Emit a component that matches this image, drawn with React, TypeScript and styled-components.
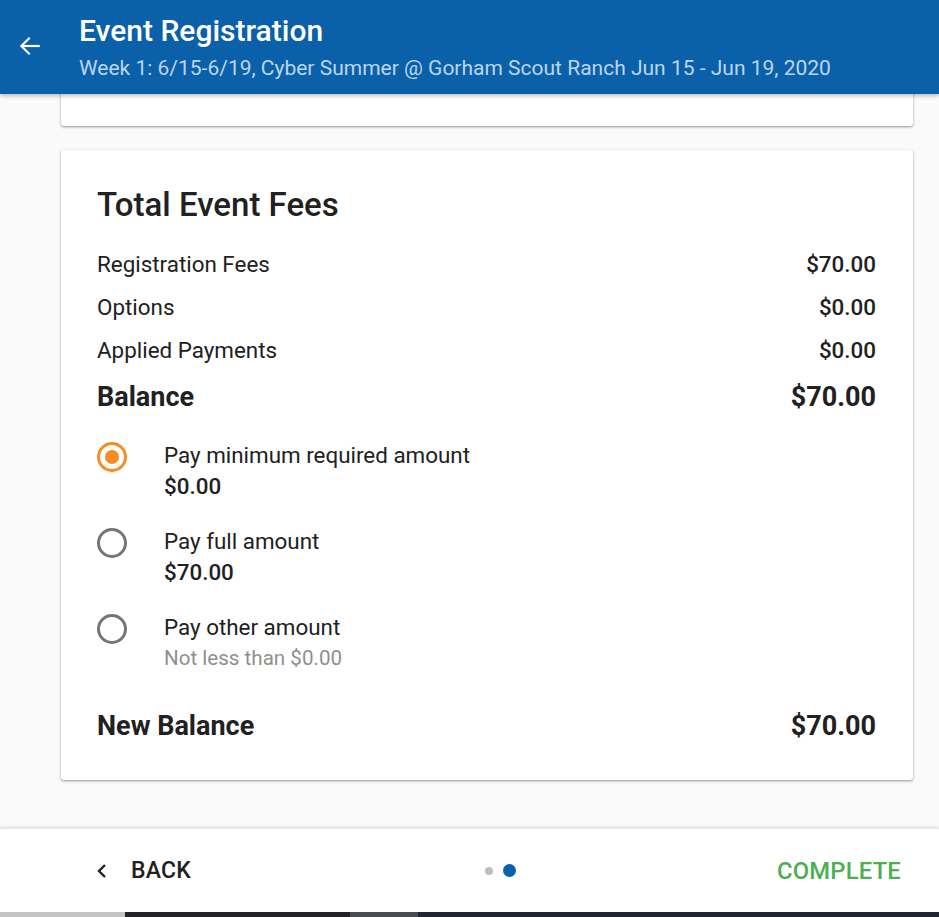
import React, { useState } from "react";
import styled, { createGlobalStyle } from "styled-components";

const Global = createGlobalStyle`
  html, body { margin: 0; padding: 0; background: #fafafa; }
  body { font-family: Roboto, "Noto Sans", Arial, sans-serif; color: #212121; }
  * { box-sizing: border-box; }
`;

const Page = styled.div`
  width: 939px;
  height: 917px;
  display: flex;
  flex-direction: column;
  overflow: hidden;
  background: #fafafa;
`;

const Header = styled.header`
  height: 94px;
  flex: none;
  background: #0a60a9;
  display: flex;
  align-items: flex-start;
  padding: 0 0 0 16px;
  position: relative;
  z-index: 2;
  box-shadow: 0 2px 4px rgba(0, 0, 0, 0.25);
`;

const BackIcon = styled.button`
  border: 0;
  background: none;
  padding: 0;
  margin-top: 32px;
  width: 28px;
  height: 28px;
  display: flex;
  align-items: center;
  justify-content: center;
  color: #fff;
  cursor: pointer;
`;

const HeaderText = styled.div`
  margin-left: 35px;
  display: flex;
  flex-direction: column;
  padding-top: 13px;
`;

const Title = styled.h1`
  margin: 0;
  font-size: 30px;
  font-weight: 500;
  color: #fff;
  line-height: 36px;
`;

const Subtitle = styled.div`
  font-size: 21px;
  color: #bcd6ef;
  line-height: 28px;
  margin-top: 5px;
`;

const Content = styled.main`
  flex: 1;
  display: flex;
  flex-direction: column;
  gap: 24px;
  padding: 0 26px 0 61px;
  margin-top: -10px;
`;

const Card = styled.section<{ $h?: number }>`
  background: #fff;
  border-radius: 3px;
  box-shadow: 0 1px 3px rgba(0, 0, 0, 0.28), 0 1px 2px rgba(0, 0, 0, 0.16);
  ${(p) => (p.$h ? `height: ${p.$h}px;` : "")}
`;

const FeesCard = styled(Card)`
  padding: 34px 37px 0 36px;
  height: 630px;
  display: flex;
  flex-direction: column;
`;

const CardTitle = styled.h2`
  margin: 0 0 16px 0;
  font-size: 33px;
  font-weight: 500;
  line-height: 42px;
  color: #212121;
`;

const Row = styled.div<{ $strong?: boolean }>`
  display: flex;
  justify-content: space-between;
  align-items: center;
  height: ${(p) => (p.$strong ? "52px" : "43px")};
  font-size: ${(p) => (p.$strong ? "27px" : "22.4px")};
  font-weight: ${(p) => (p.$strong ? 700 : 400)};
  color: #212121;
`;

const Amount = styled.span<{ $bold?: boolean }>`
  font-weight: ${(p) => (p.$bold ? 700 : 500)};
`;

const Options = styled.div`
  display: flex;
  flex-direction: column;
  gap: 25px;
  margin-top: 18px;
`;

const OptionRow = styled.label`
  display: flex;
  align-items: flex-start;
  cursor: pointer;
`;

const RadioCircle = styled.span<{ $on: boolean }>`
  width: 30px;
  height: 30px;
  margin-top: 1px;
  border-radius: 50%;
  border: 3px solid ${(p) => (p.$on ? "#f68d1e" : "#757575")};
  display: flex;
  align-items: center;
  justify-content: center;
  flex: none;
  &::after {
    content: "";
    width: 14px;
    height: 14px;
    border-radius: 50%;
    background: #f68d1e;
    display: ${(p) => (p.$on ? "block" : "none")};
  }
`;

const OptionText = styled.div`
  margin-left: 37px;
  display: flex;
  flex-direction: column;
  margin-top: -1px;
`;

const OptionLabel = styled.span`
  font-size: 22.4px;
  line-height: 31px;
  color: #212121;
`;

const OptionValue = styled.span<{ $muted?: boolean }>`
  font-size: ${(p) => (p.$muted ? "20.6px" : "22.4px")};
  line-height: 31px;
  font-weight: ${(p) => (p.$muted ? 400 : 500)};
  color: ${(p) => (p.$muted ? "#8f8f8f" : "#212121")};
`;

const NewBalance = styled(Row)`
  margin-top: 26px;
`;

const Footer = styled.footer`
  height: 84px;
  flex: none;
  background: #fff;
  box-shadow: 0 -1px 3px rgba(0, 0, 0, 0.12);
  border-top: 1px solid #e6e6e6;
  display: grid;
  grid-template-columns: 1fr auto 1fr;
  align-items: center;
  padding: 0 38px 0 95px;
`;

const NavButton = styled.button<{ $color: string; $align: string }>`
  border: 0;
  background: none;
  padding: 0;
  font-family: Roboto, Arial, sans-serif;
  font-size: 23px;
  font-weight: 500;
  letter-spacing: 0.2px;
  color: ${(p) => p.$color};
  display: flex;
  align-items: center;
  gap: 22px;
  justify-self: ${(p) => p.$align};
  cursor: pointer;
`;

const Complete = styled(NavButton)`
  font-size: 23.8px;
`;

const Dots = styled.div`
  display: flex;
  align-items: center;
  gap: 10px;
  margin-left: 4px;
`;

const Dot = styled.span<{ $active?: boolean }>`
  width: ${(p) => (p.$active ? "13px" : "8px")};
  height: ${(p) => (p.$active ? "13px" : "8px")};
  border-radius: 50%;
  background: ${(p) => (p.$active ? "#0a60a9" : "#bdbdbd")};
`;

const Taskbar = styled.div`
  height: 5px;
  flex: none;
  display: flex;
`;

const TaskSeg = styled.div<{ $w: number; $c: string }>`
  width: ${(p) => p.$w}px;
  background: ${(p) => p.$c};
  flex: none;
`;

export default function App() {
  const [choice, setChoice] = useState(0);
  const opts = [
    { label: "Pay minimum required amount", value: "$0.00" },
    { label: "Pay full amount", value: "$70.00" },
    { label: "Pay other amount", value: "Not less than $0.00", muted: true },
  ];
  return (
    <>
      <Global />
      <Page>
        <Header>
          <BackIcon aria-label="Back">
            <svg width="26" height="26" viewBox="0 0 24 24" fill="none" stroke="#fff" strokeWidth="2" strokeLinecap="square">
              <path d="M20 12H5" />
              <path d="M11 5l-7 7 7 7" />
            </svg>
          </BackIcon>
          <HeaderText>
            <Title>Event Registration</Title>
            <Subtitle>Week 1: 6/15-6/19, Cyber Summer @ Gorham Scout Ranch Jun 15 - Jun 19, 2020</Subtitle>
          </HeaderText>
        </Header>
        <Content>
          <Card $h={42} />
          <FeesCard>
            <CardTitle>Total Event Fees</CardTitle>
            <Row>
              <span>Registration Fees</span>
              <Amount>$70.00</Amount>
            </Row>
            <Row>
              <span>Options</span>
              <Amount>$0.00</Amount>
            </Row>
            <Row>
              <span>Applied Payments</span>
              <Amount>$0.00</Amount>
            </Row>
            <Row $strong>
              <span>Balance</span>
              <Amount $bold>$70.00</Amount>
            </Row>
            <Options>
              {opts.map((o, i) => (
                <OptionRow key={o.label} onClick={() => setChoice(i)}>
                  <RadioCircle $on={choice === i} />
                  <OptionText>
                    <OptionLabel>{o.label}</OptionLabel>
                    <OptionValue $muted={o.muted}>{o.value}</OptionValue>
                  </OptionText>
                </OptionRow>
              ))}
            </Options>
            <NewBalance $strong>
              <span>New Balance</span>
              <Amount $bold>$70.00</Amount>
            </NewBalance>
          </FeesCard>
        </Content>
        <Footer>
          <NavButton $color="#212121" $align="start">
            <svg width="14" height="18" viewBox="0 0 14 18" fill="none" stroke="#212121" strokeWidth="2.4">
              <path d="M10 3L4 9l6 6" />
            </svg>
            BACK
          </NavButton>
          <Dots>
            <Dot />
            <Dot $active />
          </Dots>
          <Complete $color="#4caf50" $align="end">COMPLETE</Complete>
        </Footer>
        <Taskbar>
          <TaskSeg $w={125} $c="#c4c4c4" />
          <TaskSeg $w={225} $c="#232326" />
          <TaskSeg $w={68} $c="#4a4b52" />
          <TaskSeg $w={521} $c="#202630" />
        </Taskbar>
      </Page>
    </>
  );
}
